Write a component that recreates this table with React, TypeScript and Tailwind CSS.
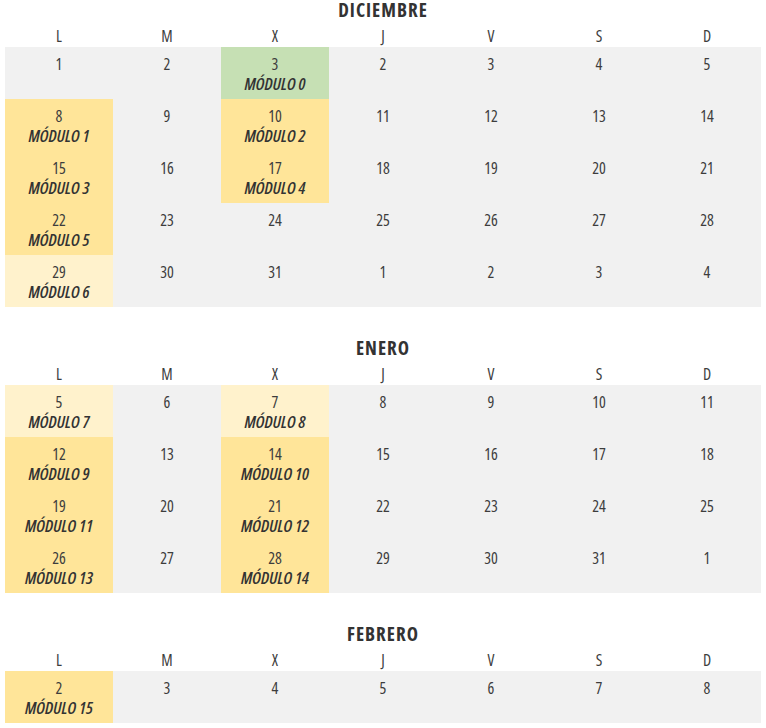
import React from "react";

type Day = {
  n: number;
  mod?: string;
  tone?: "yellow" | "light" | "green";
};

type Month = {
  name: string;
  weeks: Day[][];
};

const days = ["L", "M", "X", "J", "V", "S", "D"];

const row = (nums: number[], mods: Record<number, [string, Day["tone"]]> = {}): Day[] =>
  nums.map((n, i) => (mods[i] ? { n, mod: mods[i][0], tone: mods[i][1] } : { n }));

const months: Month[] = [
  {
    name: "DICIEMBRE",
    weeks: [
      row([1, 2, 3, 2, 3, 4, 5], { 2: ["MÓDULO 0", "green"] }),
      row([8, 9, 10, 11, 12, 13, 14], { 0: ["MÓDULO 1", "yellow"], 2: ["MÓDULO 2", "yellow"] }),
      row([15, 16, 17, 18, 19, 20, 21], { 0: ["MÓDULO 3", "yellow"], 2: ["MÓDULO 4", "yellow"] }),
      row([22, 23, 24, 25, 26, 27, 28], { 0: ["MÓDULO 5", "yellow"] }),
      row([29, 30, 31, 1, 2, 3, 4], { 0: ["MÓDULO 6", "light"] }),
    ],
  },
  {
    name: "ENERO",
    weeks: [
      row([5, 6, 7, 8, 9, 10, 11], { 0: ["MÓDULO 7", "light"], 2: ["MÓDULO 8", "light"] }),
      row([12, 13, 14, 15, 16, 17, 18], { 0: ["MÓDULO 9", "yellow"], 2: ["MÓDULO 10", "yellow"] }),
      row([19, 20, 21, 22, 23, 24, 25], { 0: ["MÓDULO 11", "yellow"], 2: ["MÓDULO 12", "yellow"] }),
      row([26, 27, 28, 29, 30, 31, 1], { 0: ["MÓDULO 13", "yellow"], 2: ["MÓDULO 14", "yellow"] }),
    ],
  },
  {
    name: "FEBRERO",
    weeks: [row([2, 3, 4, 5, 6, 7, 8], { 0: ["MÓDULO 15", "yellow"] })],
  },
];

const toneClass = {
  yellow: "bg-[#ffe599]",
  light: "bg-[#fff2cc]",
  green: "bg-[#c6e0b4]",
};

function Cell({ day }: { day: Day }) {
  return (
    <div
      className={`h-[52px] flex flex-col items-center pt-[7px] ${
        day.tone ? toneClass[day.tone] : ""
      }`}
    >
      <span className="text-[16px] leading-[20px]">{day.n}</span>
      {day.mod && (
        <span className="text-[17px] leading-[20px] font-semibold italic text-[#333]">{day.mod}</span>
      )}
    </div>
  );
}

function MonthBlock({ month }: { month: Month }) {
  return (
    <div>
      <h2 className="h-5 leading-5 text-center text-[19px] tracking-[1px] font-bold text-[#333]">
        {month.name}
      </h2>
      <div className="grid grid-cols-7 mt-[5px] h-[22px] items-center">
        {days.map((d) => (
          <div key={d} className="text-center text-[16px] leading-[22px]">
            {d}
          </div>
        ))}
      </div>
      <div className="grid grid-cols-7 bg-[#f1f1f1]">
        {month.weeks.flat().map((day, i) => (
          <Cell key={i} day={day} />
        ))}
      </div>
    </div>
  );
}

export default function App() {
  return (
    <div
      className="w-[766px] px-[5px] flex flex-col gap-[31px] bg-white text-[#3d3d3d] font-stretch-condensed"
      style={{ fontFamily: '"Open Sans", "DejaVu Sans Condensed", sans-serif' }}
    >
      {months.map((m) => (
        <MonthBlock key={m.name} month={m} />
      ))}
    </div>
  );
}
